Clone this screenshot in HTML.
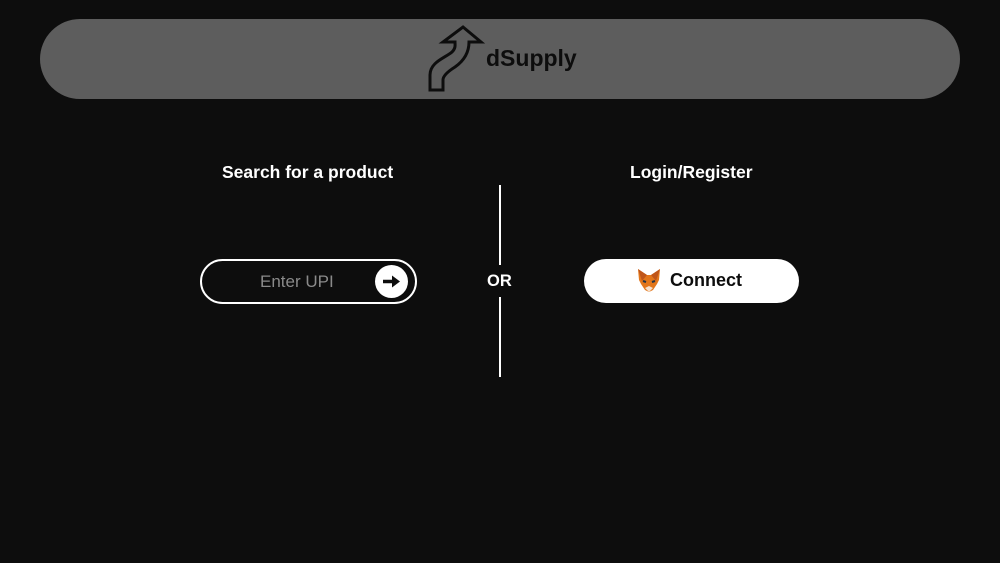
<!DOCTYPE html>
<html><head><style>
body{margin:0;width:1000px;height:563px;background:#0d0d0d;font-family:"Liberation Sans",sans-serif;position:relative;overflow:hidden}
.hdr{position:absolute;left:40px;top:19px;width:920px;height:80px;border-radius:40px;background:#5d5d5d}
.brand{position:absolute;left:486px;top:45px;font-size:23px;font-weight:bold;color:#0d0d0d}
.t{position:absolute;color:#fff;font-weight:bold;font-size:17.5px;top:162px}
.line{position:absolute;left:499px;width:2px;background:#fff}
.inp{position:absolute;left:200px;top:259px;width:213px;height:41px;border:2px solid #fff;border-radius:23px}
.inp span{position:absolute;left:58px;top:11px;color:#8a8a8a;font-size:17px}
.go{position:absolute;left:173px;top:4px;width:33px;height:33px;border-radius:50%;background:#fff}
.btn{position:absolute;left:584px;top:259px;width:215px;height:44px;border-radius:22px;background:#fff}
.btn span{position:absolute;left:86px;top:11px;font-size:18px;font-weight:bold;color:#0d0d0d}
</style></head><body>
<div class="hdr"></div>
<svg style="position:absolute;left:0;top:0" width="1000" height="110">
<path d="M430,90 L430,75 C430,62 445,58 452,52 C456,48 455,45 455,42 L443,42 L463,27 L481,42 L469,42 C469,52 465,60 455,67 C447,72 443,76 443,80 L443,90 Z" fill="none" stroke="#0d0d0d" stroke-width="3" stroke-linejoin="miter"/>
</svg>
<div class="brand">dSupply</div>
<div class="t" style="left:222px">Search for a product</div>
<div class="t" style="left:630px">Login/Register</div>
<div class="line" style="top:185px;height:80px"></div>
<div class="line" style="top:297px;height:80px"></div>
<div style="position:absolute;left:487px;top:272px;color:#fff;font-weight:bold;font-size:16.5px">OR</div>
<div class="inp"><span>Enter UPI</span><div class="go"><svg width="33" height="33"><path d="M8,16.5 H20" stroke="#0d0d0d" stroke-width="3.5"/><path d="M17,10.5 L25,16.5 L17,22.5 Z" fill="#0d0d0d"/></svg></div></div>
<div class="btn"><svg style="position:absolute;left:52px;top:9px" width="26" height="26" viewBox="0 0 26 26">
<path d="M2,1 L11,7 L15,7 L24,1 L23,12 L21,16 L17,22 L13,24 L9,22 L5,16 L3,12 Z" fill="#e2761b"/>
<path d="M2,1 L11,7 L6,13 Z M24,1 L15,7 L20,13 Z" fill="#c0561a"/>
<path d="M9,20 L13,24 L17,20 L13,18 Z" fill="#f5e0cc"/>
<path d="M7,13 L10,14 M19,13 L16,14" stroke="#233447" stroke-width="2"/>
</svg><span>Connect</span></div>
</body></html>
